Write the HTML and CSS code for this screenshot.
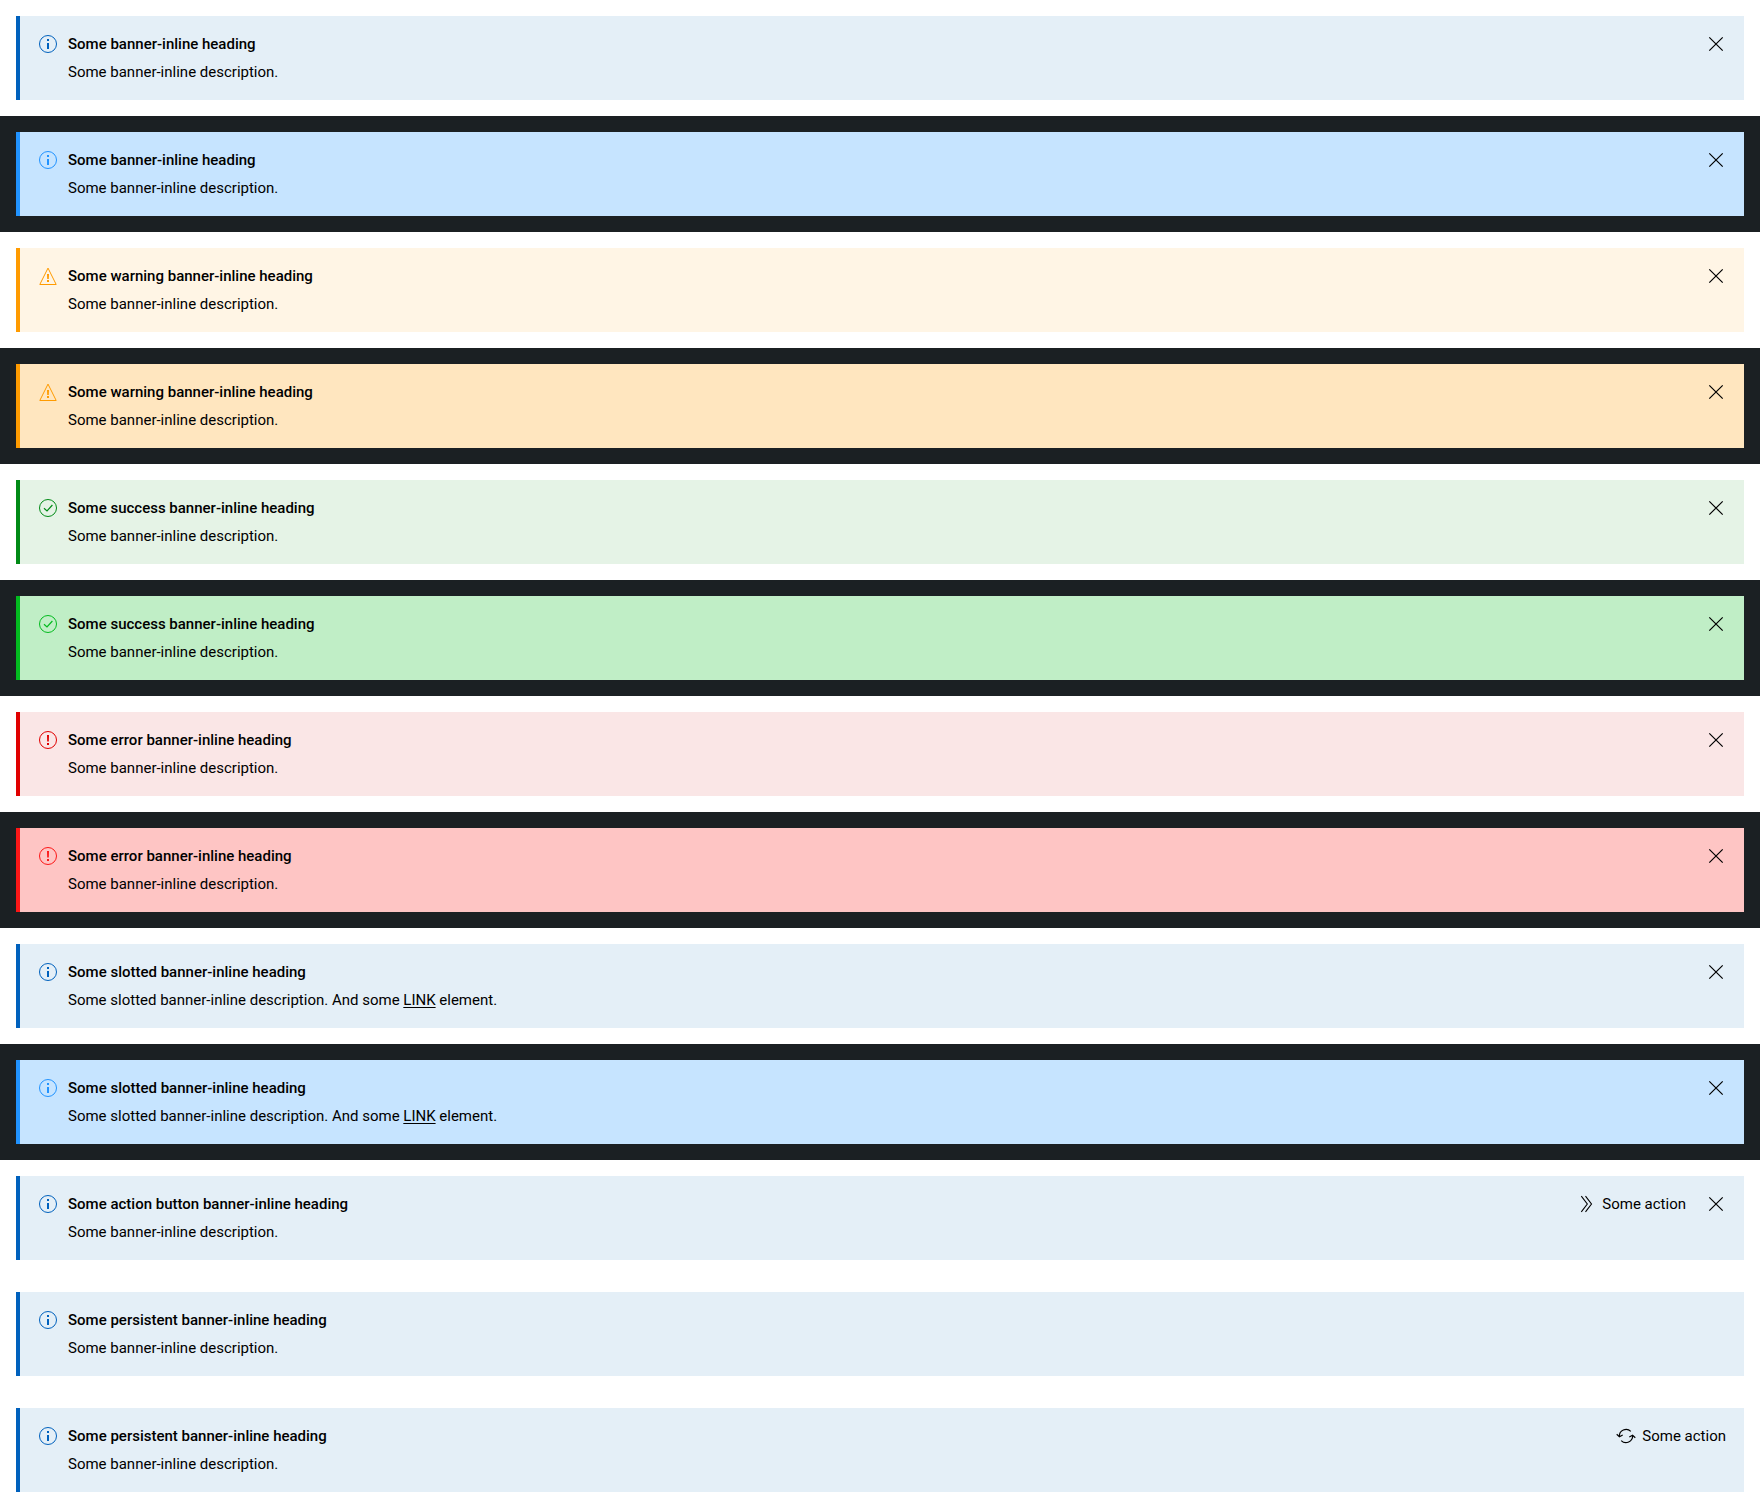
FILE: index.html
```html
<!DOCTYPE html>
<html lang="en">
<head>
<meta charset="utf-8">
<meta name="viewport" content="width=device-width, initial-scale=1">
<title>Inline banners</title>
<link rel="stylesheet" href="styles.css">
</head>
<body>
<svg class="sprite" aria-hidden="true">
  <symbol id="info" viewBox="0 0 24 24"><circle cx="12" cy="12" r="8.5" fill="none" stroke="currentColor"/><path fill="currentColor" d="M11 7h2v2h-2zM11 11h2v6h-2z"/></symbol>
  <symbol id="warning" viewBox="0 0 24 24"><path fill="none" stroke="currentColor" d="M12 4.100L20.200 20.500H3.800Z"/><path fill="currentColor" d="M11 10h2l-.2 5h-1.600zM11 16h2v2h-2z"/></symbol>
  <symbol id="success" viewBox="0 0 24 24"><circle cx="12" cy="12" r="8.500" fill="none" stroke="currentColor"/><path fill="none" stroke="currentColor" stroke-width="1.200" d="M8 12.200l3 2.800 5.400-6"/></symbol>
  <symbol id="error" viewBox="0 0 24 24"><circle cx="12" cy="12" r="8.500" fill="none" stroke="currentColor"/><path fill="currentColor" d="M11 7h2l-.2 6.500h-1.600zM11 15h2v2h-2z"/></symbol>
  <symbol id="close" viewBox="0 0 24 24"><path fill="none" stroke="currentColor" stroke-width="1.200" d="M5.300 5.300l13.400 13.400M18.700 5.300L5.300 18.700"/></symbol>
  <symbol id="arrows" viewBox="0 0 24 24"><path fill="none" stroke="currentColor" stroke-width="1.100" d="M7.300 4.200l6 7.800-6 7.800M11.500 4.200l6 7.800-6 7.800"/></symbol>
  <symbol id="refresh" viewBox="0 0 24 24"><path fill="none" stroke="currentColor" stroke-width="1.200" d="M16.800 7.400A6.700 6.700 0 0 0 5.400 12.600M7.200 16.600A6.700 6.700 0 0 0 18.600 11.400M2.700 10.300l2.700 2.400 3.300-1.700M15.300 13l3.300-1.700 2.700 2.400"/></symbol>
</svg>
<main>
  <div class="stage">
    <section class="banner info">
      <svg class="icon"><use href="#info"/></svg>
      <div class="content"><h5 class="heading">Some banner-inline heading</h5><p class="description">Some banner-inline description.</p></div>
      <button class="close" type="button" aria-label="Close"><svg class="icon"><use href="#close"/></svg></button>
    </section>
  </div>
  <div class="stage dark">
    <section class="banner info">
      <svg class="icon"><use href="#info"/></svg>
      <div class="content"><h5 class="heading">Some banner-inline heading</h5><p class="description">Some banner-inline description.</p></div>
      <button class="close" type="button" aria-label="Close"><svg class="icon"><use href="#close"/></svg></button>
    </section>
  </div>
  <div class="stage">
    <section class="banner warning">
      <svg class="icon"><use href="#warning"/></svg>
      <div class="content"><h5 class="heading">Some warning banner-inline heading</h5><p class="description">Some banner-inline description.</p></div>
      <button class="close" type="button" aria-label="Close"><svg class="icon"><use href="#close"/></svg></button>
    </section>
  </div>
  <div class="stage dark">
    <section class="banner warning">
      <svg class="icon"><use href="#warning"/></svg>
      <div class="content"><h5 class="heading">Some warning banner-inline heading</h5><p class="description">Some banner-inline description.</p></div>
      <button class="close" type="button" aria-label="Close"><svg class="icon"><use href="#close"/></svg></button>
    </section>
  </div>
  <div class="stage">
    <section class="banner success">
      <svg class="icon"><use href="#success"/></svg>
      <div class="content"><h5 class="heading">Some success banner-inline heading</h5><p class="description">Some banner-inline description.</p></div>
      <button class="close" type="button" aria-label="Close"><svg class="icon"><use href="#close"/></svg></button>
    </section>
  </div>
  <div class="stage dark">
    <section class="banner success">
      <svg class="icon"><use href="#success"/></svg>
      <div class="content"><h5 class="heading">Some success banner-inline heading</h5><p class="description">Some banner-inline description.</p></div>
      <button class="close" type="button" aria-label="Close"><svg class="icon"><use href="#close"/></svg></button>
    </section>
  </div>
  <div class="stage">
    <section class="banner error">
      <svg class="icon"><use href="#error"/></svg>
      <div class="content"><h5 class="heading">Some error banner-inline heading</h5><p class="description">Some banner-inline description.</p></div>
      <button class="close" type="button" aria-label="Close"><svg class="icon"><use href="#close"/></svg></button>
    </section>
  </div>
  <div class="stage dark">
    <section class="banner error">
      <svg class="icon"><use href="#error"/></svg>
      <div class="content"><h5 class="heading">Some error banner-inline heading</h5><p class="description">Some banner-inline description.</p></div>
      <button class="close" type="button" aria-label="Close"><svg class="icon"><use href="#close"/></svg></button>
    </section>
  </div>
  <div class="stage">
    <section class="banner info">
      <svg class="icon"><use href="#info"/></svg>
      <div class="content"><h5 class="heading">Some slotted banner-inline heading</h5><p class="description">Some slotted banner-inline description. And some <a class="link" href="#">LINK</a> element.</p></div>
      <button class="close" type="button" aria-label="Close"><svg class="icon"><use href="#close"/></svg></button>
    </section>
  </div>
  <div class="stage dark">
    <section class="banner info">
      <svg class="icon"><use href="#info"/></svg>
      <div class="content"><h5 class="heading">Some slotted banner-inline heading</h5><p class="description">Some slotted banner-inline description. And some <a class="link" href="#">LINK</a> element.</p></div>
      <button class="close" type="button" aria-label="Close"><svg class="icon"><use href="#close"/></svg></button>
    </section>
  </div>
  <div class="stage">
    <section class="banner info">
      <svg class="icon"><use href="#info"/></svg>
      <div class="content"><h5 class="heading">Some action button banner-inline heading</h5><p class="description">Some banner-inline description.</p></div>
      <button class="action" type="button"><svg class="icon"><use href="#arrows"/></svg>Some action</button>
      <button class="close" type="button" aria-label="Close"><svg class="icon"><use href="#close"/></svg></button>
    </section>
  </div>
  <div class="stage">
    <section class="banner info">
      <svg class="icon"><use href="#info"/></svg>
      <div class="content"><h5 class="heading">Some persistent banner-inline heading</h5><p class="description">Some banner-inline description.</p></div>
    </section>
  </div>
  <div class="stage">
    <section class="banner info">
      <svg class="icon"><use href="#info"/></svg>
      <div class="content"><h5 class="heading">Some persistent banner-inline heading</h5><p class="description">Some banner-inline description.</p></div>
      <button class="action" type="button"><svg class="icon"><use href="#refresh"/></svg>Some action</button>
    </section>
  </div>
</main>
</body>
</html>
```
FILE: styles.css
```css
* { box-sizing: border-box; }

body {
  margin: 0;
  background: #fff;
  color: #000;
  font: 400 15px/24px Roboto, sans-serif;
}

.sprite { display: none; }

.stage {
  padding: 16px;
  --info: #0061bd;
  --info-soft: #e4eff7;
  --warning: #ff9b00;
  --warning-soft: #fff5e5;
  --success: #018a16;
  --success-soft: #e5f3e6;
  --error: #e00000;
  --error-soft: #fae6e6;
}

.stage.dark {
  background: #1b2023;
  --info: #2193ff;
  --info-soft: #c6e4ff;
  --warning-soft: #ffe6bf;
  --success: #03bb1f;
  --success-soft: #c0eec6;
  --error: #fc1717;
  --error-soft: #fec5c4;
}

.banner {
  display: flex;
  align-items: flex-start;
  gap: 8px;
  padding: 16px;
  border-left: 4px solid var(--accent);
  background: var(--soft);
}

.banner > .icon { color: var(--accent); }

.info { --accent: var(--info); --soft: var(--info-soft); }
.warning { --accent: var(--warning); --soft: var(--warning-soft); }
.success { --accent: var(--success); --soft: var(--success-soft); }
.error { --accent: var(--error); --soft: var(--error-soft); }

.icon {
  display: block;
  flex: none;
  width: 24px;
  height: 24px;
}

.content {
  display: grid;
  flex: 1;
  gap: 4px;
}

.heading,
.description {
  margin: 0;
  font-size: inherit;
}

.heading { font-weight: 500; }

.link {
  color: inherit;
  text-underline-offset: 2px;
}

.close,
.action {
  display: flex;
  flex: none;
  padding: 0;
  border: 0;
  background: none;
  color: inherit;
  font: inherit;
  cursor: pointer;
}

.action {
  gap: 4px;
  padding-right: 2px;
}

.action + .close { margin-left: 8px; }
```
